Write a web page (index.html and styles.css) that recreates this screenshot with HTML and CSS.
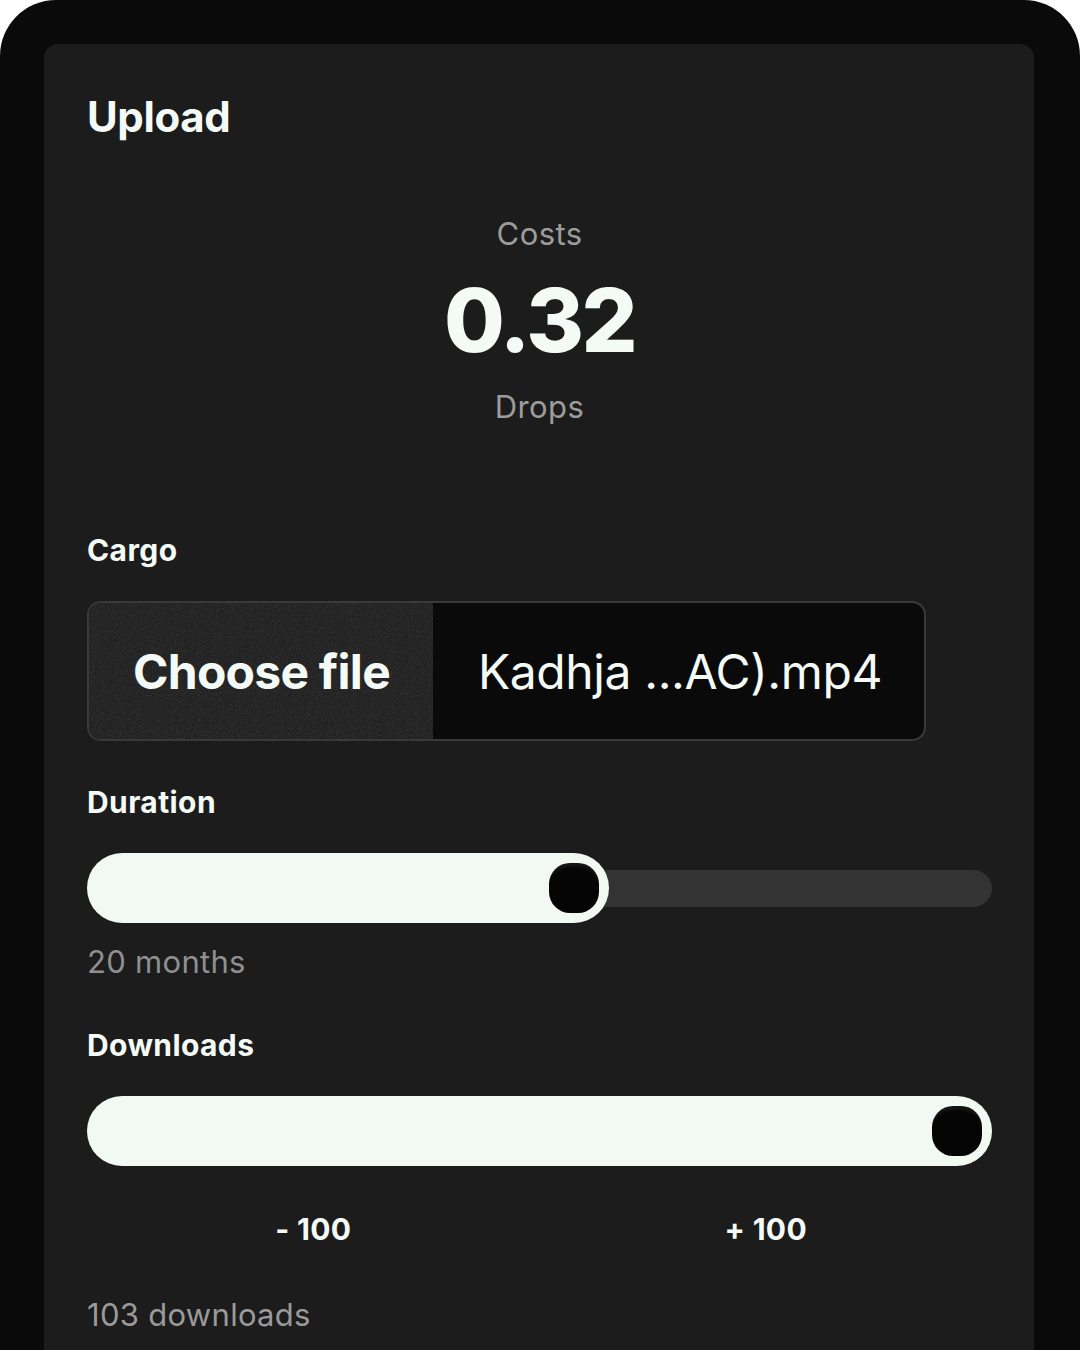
FILE: index.html
```html
<!DOCTYPE html>
<html lang="en">
<head>
<meta charset="utf-8">
<title>Upload</title>
<link rel="stylesheet" href="styles.css">
</head>
<body>
<div class="frame">
  <main class="card">
    <h1 class="title">Upload</h1>

    <section class="cost">
      <div class="cost-label">Costs</div>
      <div class="cost-value">0.32</div>
      <div class="cost-unit">Drops</div>
    </section>

    <div class="field field-cargo">
      <div class="label">Cargo</div>
      <div class="file">
        <span class="file-btn">
          <svg class="grain" width="100%" height="100%" aria-hidden="true">
            <filter id="noise">
              <feTurbulence type="fractalNoise" baseFrequency="0.95" numOctaves="2" stitchTiles="stitch"/>
              <feColorMatrix type="matrix" values="0 0 0 0 1  0 0 0 0 1  0 0 0 0 1  0 0 0 -2.2 1.25"/>
            </filter>
            <rect width="100%" height="100%" filter="url(#noise)" opacity="0.10"/>
          </svg>
          <span class="file-btn-text">Choose file</span>
        </span>
        <span class="file-name">Kadhja ...AC).mp4</span>
      </div>
    </div>

    <div class="field field-duration">
      <div class="label">Duration</div>
      <div class="slider">
        <div class="track"></div>
        <div class="fill" style="width:57.7%"><span class="thumb"></span></div>
      </div>
      <div class="hint">20 months</div>
    </div>

    <div class="field field-downloads">
      <div class="label">Downloads</div>
      <div class="slider">
        <div class="track"></div>
        <div class="fill" style="width:100%"><span class="thumb"></span></div>
      </div>
      <div class="steps">
        <button class="step" type="button">- 100</button>
        <button class="step" type="button">+ 100</button>
      </div>
      <div class="hint hint-downloads">103 downloads</div>
    </div>
  </main>
</div>
</body>
</html>
```

FILE: styles.css
```css
* {
  box-sizing: border-box;
}

html,
body {
  margin: 0;
  padding: 0;
  background: #ffffff;
}

body {
  font-family: Inter, "Noto Sans", "Liberation Sans", sans-serif;
  color: #f4faf5;
}

.frame {
  height: 1350px;
  overflow: hidden;
  background: #0a0a0a;
  border-radius: 56px 56px 0 0;
  padding: 44px 46px 0 44px;
}

.card {
  height: 100%;
  background: #1c1c1c;
  border-radius: 14px 14px 0 0;
  padding: 48px 42px 0 43px;
  display: flex;
  flex-direction: column;
}

.title {
  margin: 0;
  font-size: 42px;
  line-height: 50px;
  font-weight: 700;
  letter-spacing: -0.4px;
  color: #f4faf5;
}

.cost {
  margin-top: 74px;
  display: flex;
  flex-direction: column;
  align-items: center;
  text-align: center;
}

.cost-label,
.cost-unit {
  font-size: 31px;
  line-height: 36px;
  letter-spacing: 0.4px;
  color: #9c9c9c;
}

.cost-value {
  margin-top: 24px;
  font-size: 88px;
  line-height: 88px;
  font-weight: 800;
  letter-spacing: -2.5px;
  color: #f4faf5;
}

.cost-unit {
  margin-top: 25px;
}

.field {
  display: flex;
  flex-direction: column;
  align-items: flex-start;
}

.field-cargo {
  margin-top: 107px;
}

.field-duration {
  margin-top: 43px;
}

.field-downloads {
  margin-top: 47px;
}

.label {
  font-size: 30px;
  line-height: 36px;
  font-weight: 700;
  letter-spacing: 0.4px;
  color: #f4faf5;
}

.file {
  margin-top: 33px;
  display: inline-flex;
  height: 140px;
  border: 2px solid #393939;
  border-radius: 14px;
  overflow: hidden;
  background: #0a0a0a;
}

.file-btn {
  position: relative;
  display: flex;
  align-items: center;
  padding: 0 43px 0 44px;
  background: #222222;
  font-size: 48px;
  font-weight: 700;
  letter-spacing: -0.75px;
  color: #f4faf5;
}

.grain {
  position: absolute;
  inset: 0;
}

.file-btn-text {
  position: relative;
}

.file-name {
  display: flex;
  align-items: center;
  padding: 0 42px 0 45px;
  font-size: 48px;
  font-weight: 400;
  letter-spacing: -0.4px;
  color: #f4faf5;
}

.slider {
  margin-top: 33px;
  width: 100%;
  height: 70px;
  display: grid;
  align-items: center;
}

.track,
.fill {
  grid-area: 1 / 1;
}

.track {
  height: 37px;
  border-radius: 19px;
  background: #333333;
}

.fill {
  height: 70px;
  border-radius: 35px;
  background: #f2f9f3;
  display: flex;
  justify-content: flex-end;
  align-items: center;
  padding: 10px;
}

.thumb {
  width: 50px;
  height: 50px;
  border-radius: 21px;
  background: #050505;
  box-shadow: inset 0 6px 3px -2px rgba(255, 255, 255, 0.07);
}

.hint {
  margin-top: 21px;
  font-size: 31px;
  line-height: 36px;
  letter-spacing: 0.3px;
  color: #8f8f8f;
}

.steps {
  margin-top: 45px;
  width: 100%;
  display: grid;
  grid-template-columns: 1fr 1fr;
}

.step {
  appearance: none;
  border: 0;
  background: transparent;
  padding: 0;
  font-family: inherit;
  font-size: 30px;
  line-height: 36px;
  font-weight: 700;
  letter-spacing: 0.3px;
  color: #f4faf5;
  text-align: center;
  cursor: pointer;
}

.hint-downloads {
  margin-top: 50px;
  color: #9a9a9a;
}
```
